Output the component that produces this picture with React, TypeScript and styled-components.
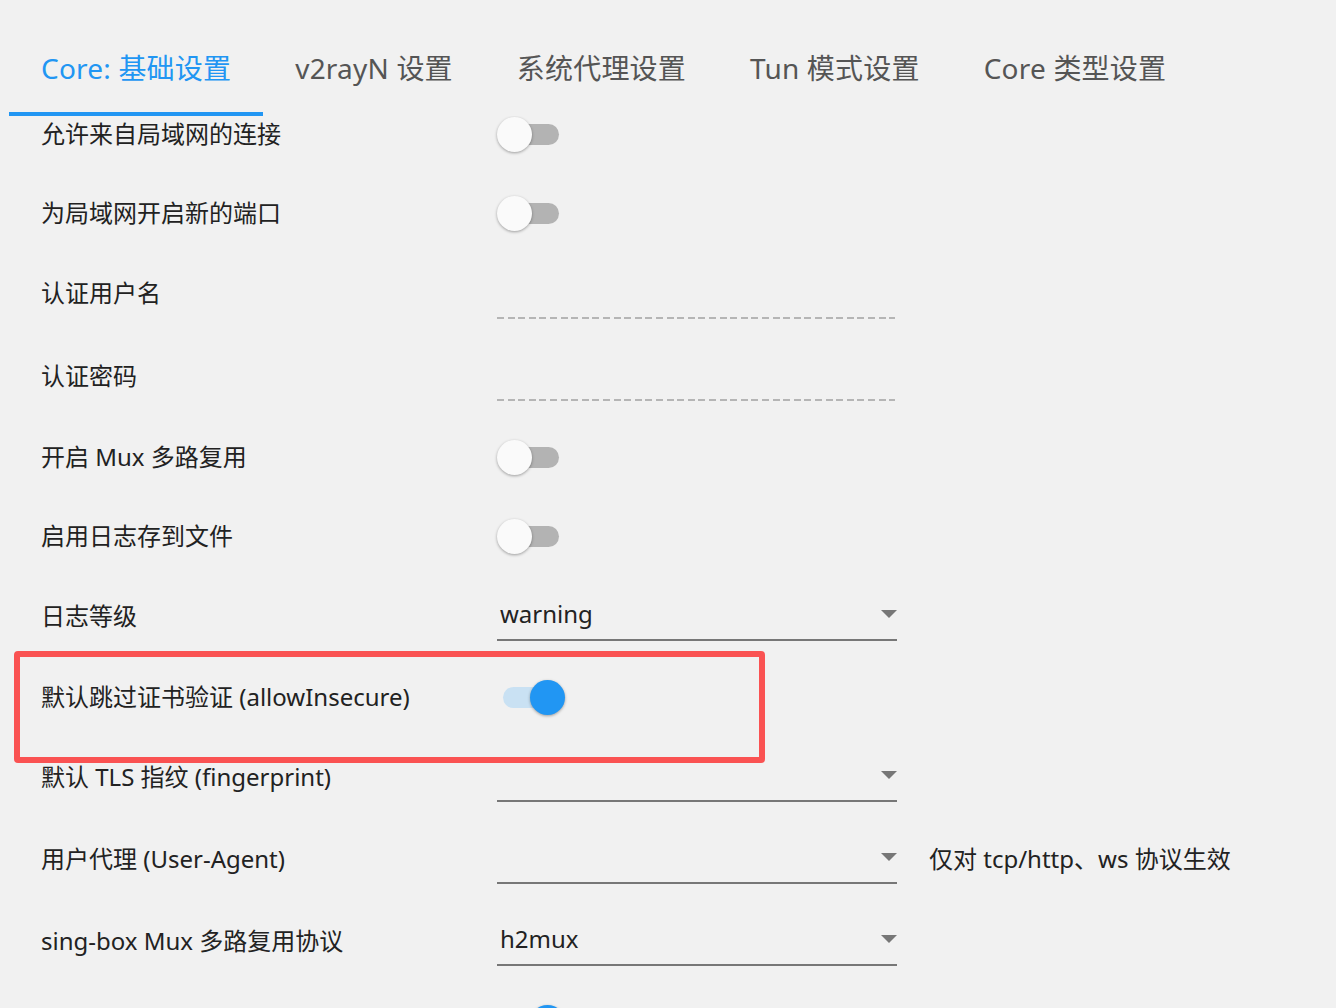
import React from "react";
import styled, { createGlobalStyle } from "styled-components";

const FONT = `"Noto Sans", "Noto Sans CJK SC", sans-serif`;

const GlobalStyle = createGlobalStyle`
  html, body { margin: 0; padding: 0; background: #f1f1f1; overflow: hidden; }
  body { font-family: ${FONT}; width: 1336px; height: 1008px; }
  * { box-sizing: border-box; }
`;

const Page = styled.div`
  width: 1336px;
  height: 1008px;
  overflow: hidden;
  background: #f1f1f1;
  display: flex;
  flex-direction: column;
  font-family: ${FONT};
`;

const TabBar = styled.div`
  display: flex;
  padding-left: 9px;
  height: 116px;
  flex-shrink: 0;
  position: relative;
  z-index: 1;
`;

const Tab = styled.div`
  display: flex;
  flex-direction: column;
`;

const TabLabel = styled.div<{ $active?: boolean }>`
  margin-top: 48px;
  height: 40px;
  line-height: 40px;
  padding: 0 32px;
  font-size: 28px;
  letter-spacing: 0.2px;
  color: ${(p) => (p.$active ? "#2196f3" : "#555555")};
  white-space: nowrap;
`;

const TabIndicator = styled.div<{ $active?: boolean }>`
  margin-top: auto;
  height: 4px;
  background: ${(p) => (p.$active ? "#2196f3" : "transparent")};
`;

const Viewport = styled.div`
  flex: 1;
  overflow: hidden;
  position: relative;
`;

const List = styled.div`
  margin-top: -21.5px;
  display: flex;
  flex-direction: column;
`;

const Row = styled.div<{ $h: number }>`
  position: relative;
  height: ${(p) => p.$h}px;
  display: grid;
  grid-template-columns: 424px 400px auto;
  column-gap: 32px;
  align-items: center;
  padding-left: 41px;
`;

const Label = styled.div`
  font-size: 24px;
  color: #222222;
  white-space: nowrap;
  padding-bottom: 4px;
`;

const Hint = styled.div`
  font-size: 24px;
  color: #222222;
  white-space: nowrap;
  padding-bottom: 4px;
`;

const ToggleBox = styled.div`
  position: relative;
  width: 68px;
  height: 35px;
`;

const Track = styled.div<{ $on?: boolean }>`
  margin: 7px 6px;
  width: 56px;
  height: 21px;
  border-radius: 10.5px;
  background: ${(p) => (p.$on ? "#c9e1f3" : "#b3b3b3")};
`;

const Thumb = styled.div<{ $on?: boolean }>`
  position: absolute;
  top: 0;
  left: ${(p) => (p.$on ? 33 : 0)}px;
  width: 35px;
  height: 35px;
  border-radius: 50%;
  background: ${(p) => (p.$on ? "#2196f3" : "#fafafa")};
  box-shadow: 0 1px 3px rgba(0, 0, 0, 0.35);
`;

const TextField = styled.div`
  width: 398px;
  height: 50px;
  background: repeating-linear-gradient(
      to right,
      #b5b5b5 0 7px,
      transparent 7px 10.6px
    )
    left bottom / 100% 2px no-repeat;
`;

const Combo = styled.div`
  width: 400px;
  height: 48px;
  display: flex;
  align-items: center;
  justify-content: space-between;
  border-bottom: 2px solid #777777;
  padding-left: 3px;
  font-size: 24px;
  color: #222222;
`;

const ComboValue = styled.span`
  padding-bottom: 4px;
`;

const Arrow = styled.div`
  width: 0;
  height: 0;
  border-left: 8px solid transparent;
  border-right: 8px solid transparent;
  border-top: 8px solid #777777;
  margin-bottom: 4px;
`;

const Highlight = styled.div`
  position: absolute;
  left: 14px;
  top: -6.5px;
  width: 751px;
  height: 112px;
  border: 6px solid #fa5252;
  border-radius: 4px;
  pointer-events: none;
`;

const Toggle: React.FC<{ on?: boolean }> = ({ on }) => (
  <ToggleBox>
    <Track $on={on} />
    <Thumb $on={on} />
  </ToggleBox>
);

type Item =
  | { kind: "toggle"; label: string; on?: boolean; highlight?: boolean }
  | { kind: "text"; label: string }
  | { kind: "combo"; label: string; value: string; hint?: string };

const items: Item[] = [
  { kind: "toggle", label: "允许来自局域网的连接" },
  { kind: "toggle", label: "为局域网开启新的端口" },
  { kind: "text", label: "认证用户名" },
  { kind: "text", label: "认证密码" },
  { kind: "toggle", label: "开启 Mux 多路复用" },
  { kind: "toggle", label: "启用日志存到文件" },
  { kind: "combo", label: "日志等级", value: "warning" },
  { kind: "toggle", label: "默认跳过证书验证 (allowInsecure)", on: true, highlight: true },
  { kind: "combo", label: "默认 TLS 指纹 (fingerprint)", value: "" },
  { kind: "combo", label: "用户代理 (User-Agent)", value: "", hint: "仅对 tcp/http、ws 协议生效" },
  { kind: "combo", label: "sing-box Mux 多路复用协议", value: "h2mux" },
  { kind: "toggle", label: "", on: true },
];

const heights = { toggle: 79, text: 82.5, combo: 82 };

const tabs = ["Core: 基础设置", "v2rayN 设置", "系统代理设置", "Tun 模式设置", "Core 类型设置"];

export default function App() {
  return (
    <Page>
      <GlobalStyle />
      <TabBar>
        {tabs.map((t, i) => (
          <Tab key={t}>
            <TabLabel $active={i === 0}>{t}</TabLabel>
            <TabIndicator $active={i === 0} />
          </Tab>
        ))}
      </TabBar>
      <Viewport>
        <List>
          {items.map((it, idx) => (
            <Row key={idx} $h={heights[it.kind]}>
              <Label>{it.label}</Label>
              {it.kind === "toggle" && <Toggle on={it.on} />}
              {it.kind === "text" && <TextField />}
              {it.kind === "combo" && (
                <Combo>
                  <ComboValue>{it.value}</ComboValue>
                  <Arrow />
                </Combo>
              )}
              {it.kind === "combo" && it.hint ? <Hint>{it.hint}</Hint> : <span />}
              {it.kind === "toggle" && it.highlight && <Highlight />}
            </Row>
          ))}
        </List>
      </Viewport>
    </Page>
  );
}
